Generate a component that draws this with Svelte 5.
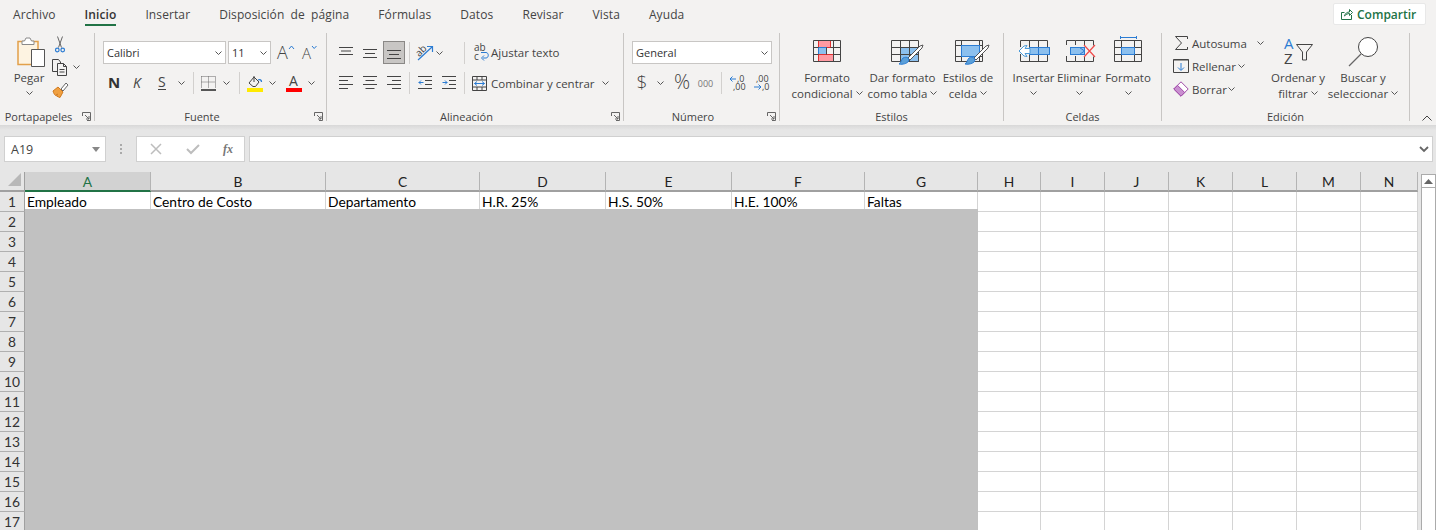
<script>
  const tabs = ['Archivo', 'Inicio', 'Insertar', 'Disposición de página', 'Fórmulas', 'Datos', 'Revisar', 'Vista', 'Ayuda'];
  const columns = [
    { name: 'A', width: 126, title: 'Empleado' },
    { name: 'B', width: 175, title: 'Centro de Costo' },
    { name: 'C', width: 154, title: 'Departamento' },
    { name: 'D', width: 126, title: 'H.R. 25%' },
    { name: 'E', width: 126, title: 'H.S. 50%' },
    { name: 'F', width: 133, title: 'H.E. 100%' },
    { name: 'G', width: 113, title: 'Faltas' },
    { name: 'H', width: 63, title: '' },
    { name: 'I', width: 64, title: '' },
    { name: 'J', width: 64, title: '' },
    { name: 'K', width: 64, title: '' },
    { name: 'L', width: 64, title: '' },
    { name: 'M', width: 64, title: '' },
    { name: 'N', width: 57, title: '' },
  ];
  const rows = Array.from({ length: 17 }, (_, i) => i + 1);
  const template = '25px ' + columns.map((c) => c.width + 'px').join(' ');
</script>

{#snippet chev()}
  <svg class="chev" width="7" height="4" viewBox="0 0 7 4"><path d="M.5.5l3 3 3-3" fill="none" stroke="#555" /></svg>
{/snippet}

{#snippet launcher()}
  <svg class="launch" width="9" height="9" viewBox="0 0 9 9" fill="none" stroke="#666"><path d="M.5 4V.5H8.500V8.500H5M3 3l4 4M7 4v3H4" /></svg>
{/snippet}

<div class="app">
  <header class="tabs">
    {#each tabs as tab}
      <span class="tab" class:active={tab === 'Inicio'}>{tab}</span>
    {/each}
    <button class="share">
      <svg width="12" height="12" viewBox="0 0 12 12" fill="none" stroke="#217346"><path d="M3.500 4.500H.5v7h10V7M3.500 8c.5-2.500 2.500-4 5-4V1.500l3 3-3 3V5.500c-2 0-3.500 1-5 2.500z" /></svg>
      Compartir
    </button>
  </header>

  <section class="ribbon">
    <div class="group g1">
      <div class="body">
        <div class="big pegar">
          <div class="ico">
            <svg width="28" height="31" viewBox="0 0 28 31">
              <rect x="1" y="4.500" width="20" height="23" fill="#fdf3e1" stroke="#e2a04a" stroke-width="1.500" />
              <path d="M5 7.500V4h2.500L9 1h4l1.500 3H17v3.500z" fill="#fff" stroke="#8a8a8a" />
              <path d="M14.500 12.500h13v17h-13z" fill="#fff" stroke="#555" />
            </svg>
          </div>
          <span class="line">Pegar</span>
          <span class="line">{@render chev()}</span>
        </div>
        <div class="stack clip">
          <div class="srow">
            <svg class="ml3" width="10" height="17" viewBox="0 0 10 17" fill="none">
              <path d="M2.500 .5l4 11M7.500 .5l-4 11" stroke="#666" />
              <circle cx="2.300" cy="14" r="1.800" stroke="#2b7cd3" stroke-width="1.200" />
              <circle cx="7.700" cy="14" r="1.800" stroke="#2b7cd3" stroke-width="1.200" />
            </svg>
          </div>
          <div class="srow">
            <svg width="17" height="17" viewBox="0 0 17 17" fill="none" stroke="#444">
              <path d="M5 12.500H.5V.5h6l2 2.500v2" />
              <path d="M5.500 4.500h6l3 3v9h-9zM11.500 4.500v3h3M7.500 10.500h5M7.500 13h5" fill="#f3f2f1" />
            </svg>
            <span class="ml4">{@render chev()}</span>
          </div>
          <div class="srow">
            <svg width="17" height="16" viewBox="0 0 17 16">
              <path d="M1 9l5-4 5 5-3 5.500c-1.500-.5-2.500-1-3.500-1.500l1-2-2 1.500C2.500 12.500 1.500 11 1 9z" fill="#f0a040" stroke="#d07a20" />
              <path d="M9 7l5-6 2 2-5 6z" fill="#fff" stroke="#666" />
            </svg>
          </div>
        </div>
      </div>
      <div class="foot"><span>Portapapeles</span>{@render launcher()}</div>
    </div>
    <i class="gsep"></i>

    <div class="group g2">
      <div class="body col">
        <div class="row r1">
          <div class="combo font"><span>Calibri</span>{@render chev()}</div>
          <div class="combo size ml2"><span>11</span>{@render chev()}</div>
          <svg class="ml6" width="17" height="15" viewBox="0 0 17 15">
            <text x="0" y="14" class="glyph big-a">A</text>
            <path d="M12 4l2.500-3L17 4" fill="none" stroke="#2b7cd3" />
          </svg>
          <svg class="ml8" width="15" height="15" viewBox="0 0 15 15">
            <text x="0" y="14" class="glyph mid-a">A</text>
            <path d="M10 1l2.200 2.500L14.500 1" fill="none" stroke="#2b7cd3" />
          </svg>
        </div>
        <div class="row r2">
          <svg class="ml5" width="11" height="14" viewBox="0 0 11 14"><text x="0" y="12" class="glyph bold">N</text></svg>
          <svg class="ml14" width="9" height="14" viewBox="0 0 9 14"><text x="0" y="12" class="glyph ital">K</text></svg>
          <svg class="ml16" width="9" height="16" viewBox="0 0 9 16"><text x="0" y="12" class="glyph reg">S</text><path d="M0 14.500h8" stroke="#444" /></svg>
          <span class="ml11">{@render chev()}</span>
          <i class="vsep ml8"></i>
          <svg class="ml7" width="15" height="15" viewBox="0 0 15 15" fill="none">
            <path d="M.5.5h14M.5 6h14M.5.5v11M7.500.5v11M14.500.5v11" stroke="#666" stroke-dasharray="1 1" />
            <path d="M0 14h15" stroke="#222" stroke-width="1.500" />
          </svg>
          <span class="ml7">{@render chev()}</span>
          <i class="vsep ml9"></i>
          <svg class="ml7" width="16" height="17" viewBox="0 0 16 17" fill="none">
            <path d="M2 8l5-6 5 5-3.500 4.500H6z" stroke="#444" />
            <path d="M7 1v6" stroke="#444" />
            <path d="M11 5c2-1 3.500 0 3.500 2" stroke="#2b7cd3" stroke-width="1.300" />
            <rect y="13" width="16" height="4" fill="#ffea00" />
          </svg>
          <span class="ml6">{@render chev()}</span>
          <svg class="ml10" width="16" height="17" viewBox="0 0 16 17">
            <text x="3" y="11" class="glyph fonta">A</text>
            <rect y="13" width="16" height="4" fill="#f00" />
          </svg>
          <span class="ml6">{@render chev()}</span>
        </div>
      </div>
      <div class="foot"><span>Fuente</span>{@render launcher()}</div>
    </div>
    <i class="gsep"></i>

    <div class="group g3">
      <div class="body col">
        <div class="row r1">
          <svg width="14" height="12" viewBox="0 0 14 12" stroke="#444"><path d="M0 .5h14M2 4h10M0 7.500h14" /></svg>
          <svg class="ml10" width="14" height="12" viewBox="0 0 14 12" stroke="#444"><path d="M0 2.500h14M2 6.500h10M0 10.500h14" /></svg>
          <span class="pressed ml6">
            <svg width="14" height="12" viewBox="0 0 14 12" stroke="#444"><path d="M0 3.500h14M2 7.500h10M0 11.500h14" /></svg>
          </span>
          <i class="vsep ml4"></i>
          <svg class="ml7" width="16" height="17" viewBox="0 0 16 17" fill="none">
            <text x="0" y="10" transform="rotate(-45 5 9)" class="glyph tiny">ab</text>
            <path d="M1 16L15 3M10 2.500h5.500V8" stroke="#2b7cd3" stroke-width="1.200" />
          </svg>
          <span class="ml3">{@render chev()}</span>
          <i class="vsep ml21"></i>
          <svg class="ml9" width="15" height="17" viewBox="0 0 15 17" fill="none">
            <text x="0" y="7" class="glyph tiny">ab</text>
            <text x="0" y="16" class="glyph tiny">c</text>
            <path d="M9 14h3c3 0 3-5.500 0-5.500H7M10 11.500l-2.500 2.500 2.500 2.500" stroke="#2b7cd3" />
          </svg>
          <span class="tool-text ml2">Ajustar texto</span>
        </div>
        <div class="row r2">
          <svg width="14" height="14" viewBox="0 0 14 14" stroke="#444"><path d="M0 .5h14M0 4.500h9M0 8.500h14M0 12.500h9" /></svg>
          <svg class="ml10" width="14" height="14" viewBox="0 0 14 14" stroke="#444"><path d="M0 .5h14M2.500 4.500h9M0 8.500h14M2.500 12.500h9" /></svg>
          <svg class="ml10" width="14" height="14" viewBox="0 0 14 14" stroke="#444"><path d="M0 .5h14M5 4.500h9M0 8.500h14M5 12.500h9" /></svg>
          <i class="vsep ml8"></i>
          <svg class="ml8" width="14" height="14" viewBox="0 0 14 14" fill="none">
            <path d="M0 .5h14M7 4.500h7M7 8.500h7M0 12.500h14" stroke="#444" />
            <path d="M5.500 6.500H.8M3 4.500l-2 2 2 2" stroke="#2b7cd3" />
          </svg>
          <svg class="ml10" width="14" height="14" viewBox="0 0 14 14" fill="none">
            <path d="M0 .5h14M7 4.500h7M7 8.500h7M0 12.500h14" stroke="#444" />
            <path d="M.5 6.500h4.700M3 4.500l2 2-2 2" stroke="#2b7cd3" />
          </svg>
          <i class="vsep ml8"></i>
          <svg class="ml7" width="15" height="15" viewBox="0 0 15 15" fill="none">
            <path d="M.5.5h14v14H.5zM.5 4h14M.5 11h14M5 .5V4M10 .5V4M5 11v3.500M10 11v3.500" stroke="#444" />
            <path d="M2.500 7.500h10M5 5.500l-2.500 2 2.500 2M10 5.500l2.500 2-2.500 2" stroke="#2b7cd3" />
          </svg>
          <span class="tool-text merge ml4">Combinar y centrar</span>
          <span class="ml9">{@render chev()}</span>
        </div>
      </div>
      <div class="foot"><span>Alineación</span>{@render launcher()}</div>
    </div>
    <i class="gsep"></i>

    <div class="group g4">
      <div class="body col">
        <div class="row r1">
          <div class="combo general"><span>General</span>{@render chev()}</div>
        </div>
        <div class="row r2">
          <svg class="ml3" width="14" height="20" viewBox="0 0 14 20"><text x="7" y="16" text-anchor="middle" class="glyph dollar">$</text></svg>
          <span class="ml8">{@render chev()}</span>
          <svg class="ml10" width="16" height="20" viewBox="0 0 16 20"><text x="8" y="16" text-anchor="middle" class="glyph percent">%</text></svg>
          <svg class="ml8" width="15" height="12" viewBox="0 0 15 12"><text x="7.500" y="9.500" text-anchor="middle" class="glyph thou">000</text></svg>
          <i class="vsep ml8"></i>
          <svg class="ml7" width="15" height="16" viewBox="0 0 15 16" fill="none">
            <text x="8" y="7" class="glyph dec">,0</text>
            <text x="4" y="15" class="glyph dec">,00</text>
            <path d="M7 4H1M3.500 1.500L1 4l2.500 2.500" stroke="#2b7cd3" />
          </svg>
          <svg class="ml9" width="15" height="16" viewBox="0 0 15 16" fill="none">
            <text x="3" y="7" class="glyph dec">,00</text>
            <text x="9" y="15" class="glyph dec">,0</text>
            <path d="M1 12h7M5.500 9.500L8 12l-2.500 2.500" stroke="#2b7cd3" />
          </svg>
        </div>
      </div>
      <div class="foot"><span>Número</span>{@render launcher()}</div>
    </div>
    <i class="gsep"></i>

    <div class="group g5">
      <div class="body">
        <div class="big w78">
          <div class="ico">
            <svg width="28" height="32" viewBox="0 0 28 32" fill="none">
              <rect x="5.500" y="4.500" width="12" height="7" fill="#ff9aa2" stroke="#e03030" />
              <rect x="5.500" y="11.500" width="8" height="7" fill="#8cc0ee" stroke="#2b7cd3" />
              <rect x="5.500" y="18.500" width="15" height="7" fill="#ff9aa2" stroke="#e03030" />
              <path d="M.5 4.500h27v21H.5zM.5 11.500h5M.5 18.500h5M17.500 11.500h10M20.500 18.500h7M20.500 4.500v21M13.500 11.500v7" stroke="#444" />
            </svg>
          </div>
          <span class="line">Formato</span>
          <span class="line">condicional {@render chev()}</span>
        </div>
        <div class="big w71 ml1">
          <div class="ico">
            <svg class="ml10" width="34" height="32" viewBox="0 0 34 32" fill="none">
              <rect x="9.500" y="11.500" width="18" height="14" fill="#8cc0ee" stroke="#2b7cd3" />
              <path d="M.5 4.500h27v21H.5zM.5 11.500h27M.5 18.500h27M9.500 4.500v21M18.500 4.500v21" stroke="#444" />
              <path d="M17 22L29 10l3-1-1 3-12 12z" fill="#fff" stroke="#555" />
              <path d="M12 22c2-1 4-1 5 0s1 3 0 4-5 3-9 2c2-1 2-4 4-6z" fill="#5a9fd8" stroke="#2b7cd3" />
            </svg>
          </div>
          <span class="line">Dar formato</span>
          <span class="line">como tabla {@render chev()}</span>
        </div>
        <div class="big w54 ml3">
          <div class="ico">
            <svg class="ml10" width="36" height="32" viewBox="0 0 36 32" fill="none">
              <path d="M.5 4.500h27v21H.5zM.5 9.500h27M.5 20.500h27M6.500 4.500v21M24.500 4.500v21" stroke="#444" />
              <rect x="6.500" y="9.500" width="18" height="11" fill="#8cc0ee" stroke="#2b7cd3" />
              <path d="M19 22L31 10l3-1-1 3-12 12z" fill="#fff" stroke="#555" />
              <path d="M14 22c2-1 4-1 5 0s1 3 0 4-5 3-9 2c2-1 2-4 4-6z" fill="#5a9fd8" stroke="#2b7cd3" />
            </svg>
          </div>
          <span class="line">Estilos de</span>
          <span class="line">celda {@render chev()}</span>
        </div>
      </div>
      <div class="foot"><span>Estilos</span></div>
    </div>
    <i class="gsep"></i>

    <div class="group g6">
      <div class="body">
        <div class="big w43">
          <div class="ico">
            <svg width="32" height="32" viewBox="0 0 32 32" fill="none">
              <path d="M2.500 11V4.500h27V11M2.500 18v7.500h27V18M11.500 4.500V11M20.500 4.500V11M11.500 18v7.500M20.500 18v7.500" stroke="#444" />
              <rect x="11.500" y="11.500" width="20" height="7" fill="#8cc0ee" stroke="#2b7cd3" />
              <path d="M20.500 11.500v7" stroke="#2b7cd3" />
              <path d="M12 12.500H7l2-3-3 .5-5 5 5 5 3 .5-2-3h5z" fill="#fff" stroke="#4a9ad8" />
            </svg>
          </div>
          <span class="line">Insertar</span>
          <span class="line">{@render chev()}</span>
        </div>
        <div class="big w48">
          <div class="ico">
            <svg class="ml4" width="30" height="32" viewBox="0 0 30 32" fill="none">
              <path d="M.5 9V4.500h9M.5 20v5.500h9M9.500 4.500h18v5M9.500 25.500h18v-5M9.500 4.500V9M9.500 20v5.500M18.500 4.500V9M18.500 20v5.500" stroke="#444" />
              <rect x="4.500" y="11.500" width="14" height="7" fill="#8cc0ee" stroke="#2b7cd3" />
              <path d="M13.500 11.500l5 3.500-5 3.500" fill="#8cc0ee" stroke="#2b7cd3" />
              <path d="M18 9l11 12M29 9L18 21" stroke="#f04a4a" stroke-width="1.200" />
            </svg>
          </div>
          <span class="line">Eliminar</span>
          <span class="line">{@render chev()}</span>
        </div>
        <div class="big w50">
          <div class="ico">
            <svg width="28" height="32" viewBox="0 0 28 32" fill="none">
              <path d="M6.500 0v3M22.500 0v3M6.500 1.500h16" stroke="#2b7cd3" />
              <path d="M.5 4.500h27v21H.5zM.5 11.500h27M.5 18.500h27M7.500 4.500v21M20.500 4.500v21" stroke="#444" />
              <rect x="7.500" y="11.500" width="13" height="7" fill="#8cc0ee" stroke="#2b7cd3" />
            </svg>
          </div>
          <span class="line">Formato</span>
          <span class="line">{@render chev()}</span>
        </div>
      </div>
      <div class="foot"><span>Celdas</span></div>
    </div>
    <i class="gsep"></i>

    <div class="group g7">
      <div class="body">
        <div class="stack edit">
          <div class="srow">
            <svg class="ml2" width="13" height="14" viewBox="0 0 13 14" fill="none"><path d="M12.500 3V.5H.5L6.500 7l-6 6.500h12V11" stroke="#444" /></svg>
            <span class="tool-text ml4">Autosuma</span>
            <span class="ml10">{@render chev()}</span>
          </div>
          <div class="srow">
            <svg width="16" height="14" viewBox="0 0 16 14" fill="none">
              <path d="M.5.5h15v13H.5z" stroke="#444" />
              <path d="M.5 1h15" stroke="#444" />
              <path d="M8 4v7M5 8.500l3 3 3-3" stroke="#2b7cd3" />
            </svg>
            <span class="tool-text ml3">Rellenar</span>
            <span class="ml2">{@render chev()}</span>
          </div>
          <div class="srow">
            <svg width="16" height="16" viewBox="0 0 16 16" stroke="#a04aa8">
              <path d="M.8 8L8 .8 15.200 8 8 15.200z" fill="#fff" />
              <path d="M.8 8L4.500 4.300l7.200 7.200L8 15.200z" fill="#c98fd0" />
            </svg>
            <span class="tool-text ml3">Borrar</span>
            <span class="ml1">{@render chev()}</span>
          </div>
        </div>
        <div class="big w60">
          <div class="ico">
            <svg width="29" height="32" viewBox="0 0 29 32" fill="none">
              <text x="0" y="13" class="glyph sort-a">A</text>
              <text x="0" y="28" class="glyph sort-z">Z</text>
              <path d="M12.500 8.500h16l-6 7.500v8h-4v-8z" stroke="#444" />
            </svg>
          </div>
          <span class="line">Ordenar y</span>
          <span class="line">filtrar {@render chev()}</span>
        </div>
        <div class="big w70">
          <div class="ico">
            <svg width="30" height="32" viewBox="0 0 30 32" fill="none">
              <circle cx="20" cy="11" r="9.500" fill="#fff" stroke="#444" />
              <path d="M13 18L1 30" stroke="#666" stroke-width="1.200" />
            </svg>
          </div>
          <span class="line">Buscar y</span>
          <span class="line">seleccionar {@render chev()}</span>
        </div>
      </div>
      <div class="foot"><span>Edición</span></div>
    </div>
    <i class="gsep"></i>
    <div class="collapse">
      <svg width="10" height="6" viewBox="0 0 10 6"><path d="M.5 5.500L5 1l4.500 4.500" fill="none" stroke="#444" /></svg>
    </div>
  </section>

  <section class="formula">
    <div class="namebox">
      <span>A19</span>
      <svg width="8" height="5" viewBox="0 0 8 5"><path d="M0 0h8L4 5z" fill="#888" /></svg>
    </div>
    <div class="dots"><b></b><b></b><b></b></div>
    <div class="fx">
      <svg width="12" height="12" viewBox="0 0 12 12"><path d="M1 1l10 10M11 1L1 11" stroke="#bdbdbd" stroke-width="1.500" /></svg>
      <svg width="14" height="12" viewBox="0 0 14 12"><path d="M1 6l4 4 8-8" fill="none" stroke="#bdbdbd" stroke-width="2" /></svg>
      <span>fx</span>
    </div>
    <div class="input">
      <svg width="10" height="6" viewBox="0 0 10 6"><path d="M1 1l4 4 4-4" fill="none" stroke="#666" stroke-width="1.800" /></svg>
    </div>
  </section>

  <section class="sheet">
    <div class="grid" style:grid-template-columns={template}>
      <div class="corner">
        <svg width="13" height="13" viewBox="0 0 13 13"><path d="M13 0v13H0z" fill="#b8b8b8" /></svg>
      </div>
      {#each columns as col, i}
        <div class="colhead" class:sel={i === 0}>{col.name}</div>
      {/each}
      {#each rows as row}
        <div class="rowhead">{row}</div>
        {#each columns as col}
          <div class="cell">{row === 1 ? col.title : ''}</div>
        {/each}
      {/each}
    </div>
    <div class="mask"></div>
    <aside class="scroll">
      <div class="scroll-btn">
        <svg width="9" height="5" viewBox="0 0 9 5"><path d="M0 5h9L4.500 0z" fill="#666" /></svg>
      </div>
      <div class="track"></div>
    </aside>
  </section>
</div>

<style>
  :global(body) {
    margin: 0;
    background: #e6e6e6;
  }
  .app {
    width: 1436px;
    height: 530px;
    overflow: hidden;
    font-family: 'Open Sans', 'Noto Sans', sans-serif;
    font-size: 11.5px;
    color: #444;
  }
  svg {
    display: block;
    flex: none;
    overflow: visible;
  }
  i {
    display: block;
    flex: none;
  }

  .tabs {
    display: flex;
    align-items: flex-start;
    gap: 29px;
    height: 30px;
    padding-left: 13px;
    box-sizing: border-box;
    background: #f3f2f1;
    font-size: 12px;
    letter-spacing: 0.1px;
    word-spacing: 3px;
  }
  .tab {
    height: 26px;
    line-height: 30px;
    box-sizing: border-box;
    white-space: nowrap;
  }
  .tab.active {
    color: #333;
    font-weight: 600;
    border-bottom: 2px solid #217346;
    line-height: 30px;
  }
  .share {
    display: flex;
    align-items: center;
    gap: 4px;
    margin: 3px 10px 0 auto;
    width: 93px;
    height: 22px;
    padding: 0 0 0 7px;
    border: 1px solid #e8e8e8;
    border-radius: 2px;
    background: #fff;
    color: #217346;
    font: 600 12px 'Open Sans', sans-serif;
    white-space: nowrap;
    box-sizing: border-box;
  }

  .ribbon {
    display: flex;
    height: 100px;
    padding-top: 3px;
    box-sizing: border-box;
    background: linear-gradient(#f3f2f1 95px, #d8d8d8 95px, #e6e6e6 100px);
  }
  .group {
    display: flex;
    flex-direction: column;
    height: 92px;
    flex: none;
  }
  .gsep {
    width: 1px;
    height: 88px;
    background: #c8c6c4;
  }
  .body {
    display: flex;
    height: 75px;
  }
  .body.col {
    flex-direction: column;
  }
  .foot {
    display: flex;
    align-items: center;
    height: 16px;
    padding-right: 3px;
    font-size: 11px;
    color: #444;
  }
  .g5 .foot,
  .g6 .foot,
  .g7 .foot {
    padding-right: 0;
  }
  .foot span {
    flex: 1;
    text-align: center;
    white-space: nowrap;
  }
  .launch {
    margin-left: 5px;
  }
  .g1 { width: 94px; }
  .g2 { width: 231px; }
  .g3 { width: 296px; }
  .g4 { width: 155px; }
  .g5 { width: 223px; }
  .g6 { width: 157px; }
  .g7 { width: 247px; }
  .g1 .body { padding-left: 13px; }
  .g2 .body { padding-left: 8px; }
  .g3 .body { padding-left: 12px; }
  .g4 .body { padding-left: 8px; }
  .g5 .body { padding-left: 8px; }
  .g6 .body { padding-left: 8px; }
  .g7 .body { padding-left: 11px; }

  .row {
    display: flex;
    align-items: center;
    flex: none;
  }
  .r1 {
    height: 23px;
    margin-top: 8px;
  }
  .r2 {
    height: 24px;
    margin-top: 7px;
  }
  .big {
    display: flex;
    flex-direction: column;
    align-items: center;
    flex: none;
    height: 70px;
  }
  .ico {
    display: flex;
    justify-content: center;
    height: 33px;
    padding-top: 3px;
  }
  .line {
    display: flex;
    align-items: center;
    justify-content: center;
    gap: 3px;
    height: 16px;
    white-space: nowrap;
  }
  .pegar { width: 32px; }
  .pegar .ico { padding-left: 3px; padding-top: 4px; height: 32px; }
  .w43 { width: 43px; }
  .w48 { width: 48px; }
  .w50 { width: 50px; }
  .w54 { width: 54px; }
  .w60 { width: 60px; }
  .w70 { width: 70px; }
  .w71 { width: 71px; }
  .w78 { width: 78px; }

  .stack {
    display: grid;
    flex: none;
  }
  .srow {
    display: flex;
    align-items: center;
  }
  .clip {
    width: 42px;
    margin-left: 7px;
    grid-template-rows: 22px 24px 22px;
    align-content: start;
  }
  .edit {
    width: 95px;
    grid-template-rows: 20px 26px 20px;
    align-content: start;
  }
  .tool-text {
    white-space: nowrap;
  }
  .merge {
    width: 102px;
  }

  .combo {
    display: flex;
    align-items: center;
    justify-content: space-between;
    height: 23px;
    padding: 0 3px;
    box-sizing: border-box;
    background: #fff;
    border: 1px solid #c8c6c4;
    color: #333;
    font-size: 11px;
    flex: none;
  }
  .font { width: 123px; }
  .size { width: 43px; }
  .general { width: 140px; }
  .pressed {
    display: flex;
    align-items: center;
    justify-content: center;
    width: 22px;
    height: 23px;
    box-sizing: border-box;
    background: #c8c6c4;
    border: 1px solid #8a8886;
  }
  .vsep {
    width: 1px;
    height: 22px;
    background: #d2d0ce;
  }

  .glyph {
    fill: #444;
    font-family: 'Open Sans', sans-serif;
  }
  .big-a { font-size: 18px; font-weight: 300; }
  .mid-a { font-size: 15px; font-weight: 300; }
  .bold { font-size: 15px; font-weight: 700; fill: #333; }
  .ital { font-size: 14px; font-style: italic; }
  .reg { font-size: 14px; }
  .fonta { font-size: 14px; }
  .tiny { font-size: 10px; }
  .dollar { font-size: 19px; font-weight: 300; }
  .percent { font-size: 20px; font-weight: 300; }
  .thou { font-size: 9px; fill: #777; }
  .dec { font-size: 9px; }
  .sort-a { font-size: 15px; fill: #2b7cd3; }
  .sort-z { font-size: 15px; }

  .collapse {
    align-self: flex-start;
    margin: 82px 0 0 12px;
  }

  .formula {
    display: flex;
    align-items: center;
    height: 42px;
    padding: 6px 0 10px;
    box-sizing: border-box;
    background: #e6e6e6;
  }
  .namebox {
    display: flex;
    align-items: center;
    justify-content: space-between;
    width: 102px;
    height: 26px;
    margin-left: 4px;
    padding: 0 5px 0 6px;
    box-sizing: border-box;
    background: #fff;
    border: 1px solid #d0d0d0;
    font-size: 12.5px;
    color: #444;
  }
  .dots {
    display: flex;
    flex-direction: column;
    gap: 2px;
    width: 2px;
    margin: 0 14px;
  }
  .dots b {
    width: 2px;
    height: 2px;
    background: #aaa;
  }
  .fx {
    display: flex;
    align-items: center;
    justify-content: space-between;
    width: 109px;
    height: 26px;
    padding: 0 11px 0 13px;
    box-sizing: border-box;
    background: #fff;
    border: 1px solid #d0d0d0;
  }
  .fx span {
    font: italic 700 12px 'Liberation Serif', serif;
    color: #777;
  }
  .input {
    display: flex;
    align-items: center;
    justify-content: flex-end;
    width: 1184px;
    height: 26px;
    margin-left: 4px;
    padding-right: 3px;
    box-sizing: border-box;
    background: #fff;
    border: 1px solid #d0d0d0;
  }

  .sheet {
    position: relative;
    display: flex;
  }
  .grid {
    display: grid;
    grid-auto-rows: 20px;
    grid-template-rows: 20px;
    font-family: Lato, sans-serif;
    font-size: 13.8px;
    color: #000;
  }
  .corner {
    display: flex;
    align-items: flex-end;
    justify-content: flex-end;
    padding: 0 3px 4px 0;
    box-sizing: border-box;
    border-bottom: 2px solid #a0a0a0;
    border-right: 1px solid #a0a0a0;
  }
  .colhead {
    display: flex;
    align-items: center;
    justify-content: center;
    box-sizing: border-box;
    border-right: 1px solid #b4b4b4;
    border-bottom: 2px solid #a0a0a0;
    color: #222;
  }
  .colhead.sel {
    background: #d2d2d2;
    border-bottom-color: #217346;
    color: #217346;
  }
  .rowhead {
    display: flex;
    align-items: center;
    justify-content: center;
    box-sizing: border-box;
    border-right: 1px solid #a0a0a0;
    border-bottom: 1px solid #b0b0b0;
    color: #333;
  }
  .cell {
    padding-left: 2px;
    line-height: 20px;
    background: #fff;
    box-sizing: border-box;
    border-right: 1px solid #d4d4d4;
    border-bottom: 1px solid #d4d4d4;
    white-space: nowrap;
    overflow: hidden;
  }
  .mask {
    position: absolute;
    left: 25px;
    top: 37px;
    width: 953px;
    height: 330px;
    background: #c1c1c1;
  }
  .scroll {
    display: flex;
    flex-direction: column;
    width: 15px;
    height: 358px;
    margin: 2px 0 0 3px;
  }
  .scroll-btn {
    display: flex;
    align-items: center;
    justify-content: center;
    height: 14px;
    background: #fff;
    border: 1px solid #ababab;
    box-sizing: border-box;
  }
  .track {
    flex: 1;
    background: #fff;
    border: 1px solid #ababab;
    border-top: none;
    border-bottom: none;
  }

  .ml1 { margin-left: 1px; }
  .ml2 { margin-left: 2px; }
  .ml3 { margin-left: 3px; }
  .ml4 { margin-left: 4px; }
  .ml5 { margin-left: 5px; }
  .ml6 { margin-left: 6px; }
  .ml7 { margin-left: 7px; }
  .ml8 { margin-left: 8px; }
  .ml9 { margin-left: 9px; }
  .ml10 { margin-left: 10px; }
  .ml11 { margin-left: 11px; }
  .ml14 { margin-left: 14px; }
  .ml16 { margin-left: 16px; }
  .ml21 { margin-left: 21px; }
</style>
